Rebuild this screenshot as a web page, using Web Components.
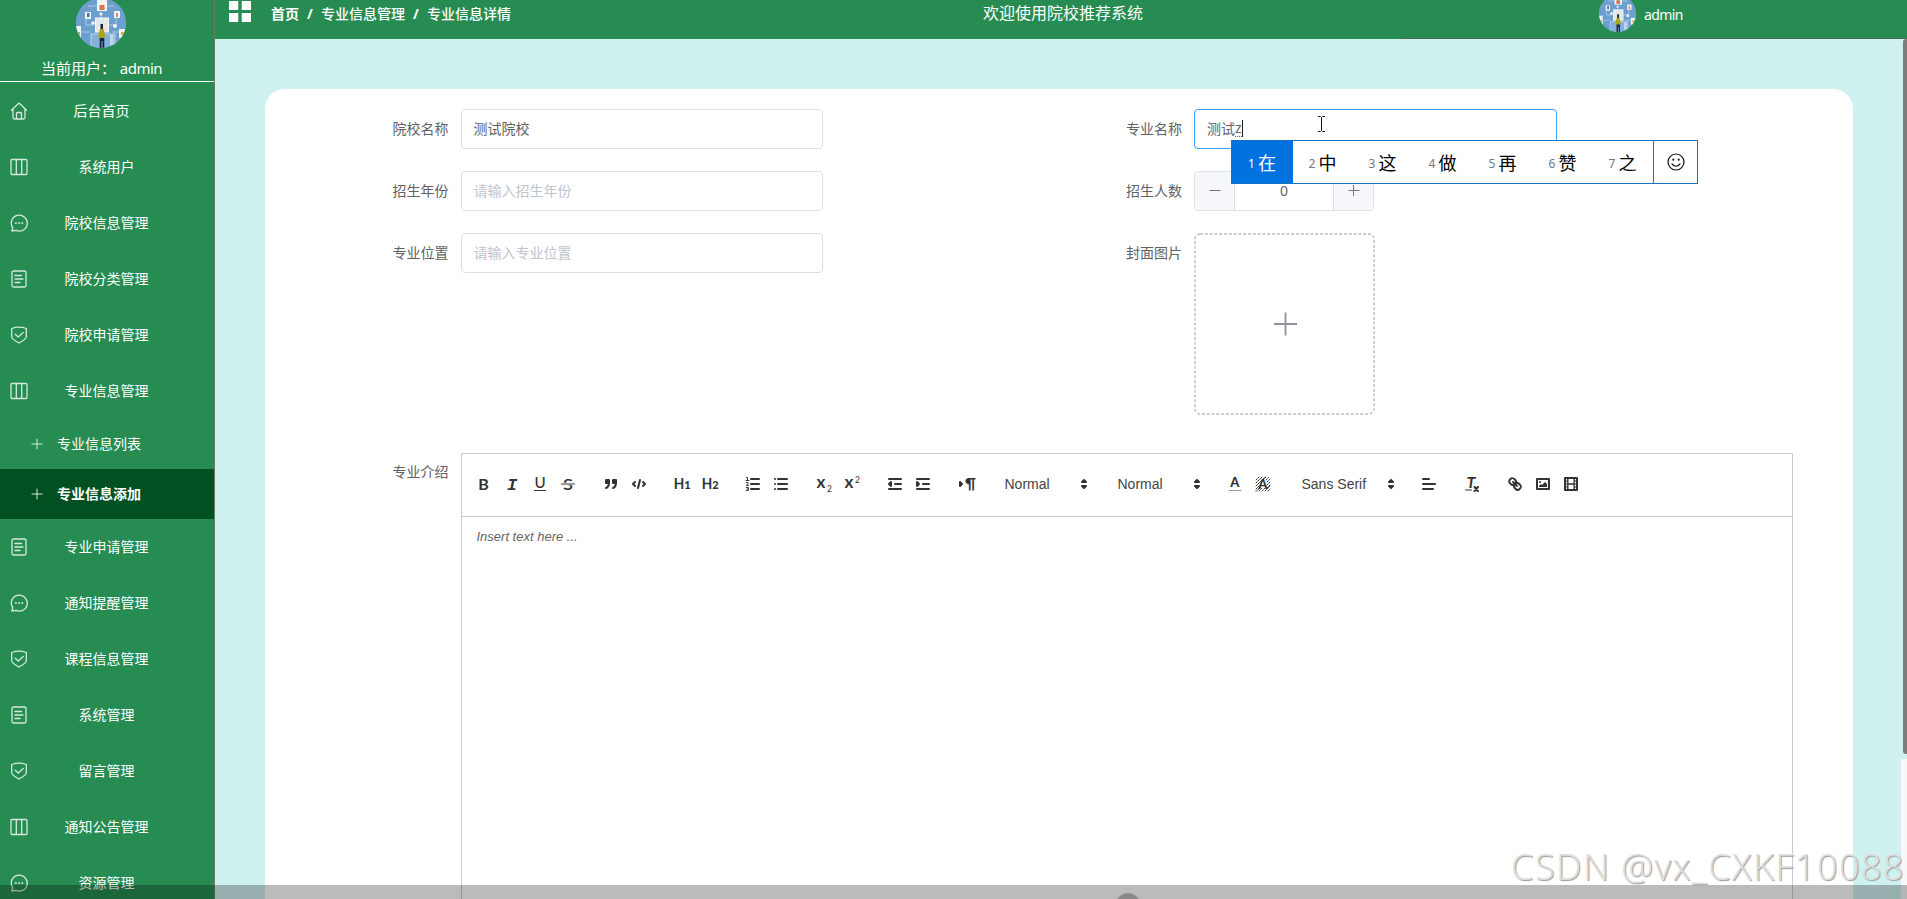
<!DOCTYPE html>
<html lang="zh-CN">
<head>
<meta charset="UTF-8">
<title>院校推荐系统</title>
<style>
  html, body { margin: 0; height: 100%; overflow: hidden; }
  body { font-family: "Noto Sans", "Noto Sans CJK SC", sans-serif; font-size: 14px; color: #606266; }
</style>
</head>
<body>
<admin-layout>
  <side-menu slot="side" user="admin">
    <menu-item icon="home" home>后台首页</menu-item>
    <menu-item icon="columns">系统用户</menu-item>
    <menu-item icon="chat">院校信息管理</menu-item>
    <menu-item icon="doc">院校分类管理</menu-item>
    <menu-item icon="shield">院校申请管理</menu-item>
    <menu-item icon="columns">专业信息管理</menu-item>
    <menu-item icon="plus" sub>专业信息列表</menu-item>
    <menu-item icon="plus" sub active>专业信息添加</menu-item>
    <menu-item icon="doc">专业申请管理</menu-item>
    <menu-item icon="chat">通知提醒管理</menu-item>
    <menu-item icon="shield">课程信息管理</menu-item>
    <menu-item icon="doc">系统管理</menu-item>
    <menu-item icon="shield">留言管理</menu-item>
    <menu-item icon="columns">通知公告管理</menu-item>
    <menu-item icon="chat">资源管理</menu-item>
  </side-menu>
  <top-bar slot="top" user="admin">欢迎使用院校推荐系统</top-bar>
  <form-card>
    <form-field label="院校名称"><text-input value="测试院校"></text-input></form-field>
    <form-field label="专业名称"><text-input value="测试" typing="z" focused></text-input></form-field>
    <form-field label="招生年份"><text-input placeholder="请输入招生年份"></text-input></form-field>
    <form-field label="招生人数"><number-stepper>0</number-stepper></form-field>
    <form-field label="专业位置"><text-input placeholder="请输入专业位置"></text-input></form-field>
    <form-field label="封面图片"><image-upload></image-upload></form-field>
    <form-field label="专业介绍" wide><rich-editor placeholder="Insert text here ..."></rich-editor></form-field>
  </form-card>
</admin-layout>
<ime-bar></ime-bar>
<page-overlay>CSDN @vx_CXKF10088</page-overlay>

<script>
const ICONS = {
  home: '<path d="M1.500 8.200 9 1l7.500 7.200M3 7v8.500q0 1.500 1.500 1.500h9q1.500 0 1.500-1.500V7M6.500 17v-5.500q0-1 1-1h3q1 0 1 1V17"/>',
  columns: '<rect x="1" y="1.500" width="16" height="15" rx="1"/><path d="M6.300 1.500v15M11.700 1.500v15"/>',
  chat: '<path d="M2.800 13.800A8 8 0 1 1 6 16.400L1.800 17z"/><path d="M5.500 9h.6M8.700 9h.6M11.900 9h.6" stroke-width="1.700"/>',
  doc: '<rect x="2" y="1" width="14" height="16" rx="1.500"/><path d="M5 5.500h6.500M5 9h8M5 12.500h5"/>',
  shield: '<path d="M1.700 2.500Q9-.2 16.300 2.500V11q0 2-7.300 6-7.300-4-7.300-6z"/><path d="m5.200 8.300 3 2.800 5-4.600"/>',
  plus: '<path d="M9 4v10M4 9h10"/>'
};

class AdminLayout extends HTMLElement {
  connectedCallback() {
    this.attachShadow({ mode: "open" });
    this.shadowRoot.innerHTML = `
      <style>
        :host {
          display: grid;
          grid-template: 39px 860px / 215px 1fr;
          width: 100%;
          height: 899px;
          overflow: hidden;
          background: #cff2f0;
        }
        .side { grid-row: 1 / 3; overflow: hidden; }
        main {
          display: flex;
          align-items: flex-start;
          padding: 50px 48px 0 50px;
          overflow: hidden;
          min-width: 0;
        }
        .scroll {
          width: 6px;
          height: 860px;
          display: flex;
          flex-direction: column;
          align-items: flex-end;
        }
        .thumb { width: 4px; height: 715px; background: #7b7b7b; border-radius: 3px 0 0 3px; }
        .track { width: 6px; flex: 1; margin-top: 5px; background: #f8f8f8; }
        .body { display: grid; grid-template-columns: 1fr 6px; overflow: hidden; }
      </style>
      <div class="side"><slot name="side"></slot></div>
      <slot name="top"></slot>
      <div class="body">
        <main><slot></slot></main>
        <div class="scroll"><div class="thumb"></div><div class="track"></div></div>
      </div>
    `;
  }
}

class UserAvatar extends HTMLElement {
  connectedCallback() {
    this.attachShadow({ mode: "open" });
    this.shadowRoot.innerHTML = `
      <style>
        :host { display: block; border-radius: 50%; overflow: hidden; background: #6c9fce; }
        svg { display: block; width: 100%; height: 100%; }
      </style>
      <svg viewBox="0 0 50 50">
        <rect width="50" height="50" fill="#6d9fce"/>
        <path d="M12 8h26M10 19v8h8M40 19v8h-8M25 14v6M5 34h9M36 34h9" stroke="#a9cbe6" fill="none"/>
        <g fill="#f1f4f5">
          <rect x="21" y="2" width="10" height="11"/><rect x="9" y="14" width="6" height="7"/>
          <rect x="38" y="13" width="6" height="7"/>
          <rect x="0" y="28" width="5" height="12"/><rect x="43" y="31" width="7" height="9"/>
          <circle cx="17" cy="25" r="1.800"/><circle cx="39" cy="28" r="2"/><circle cx="25" cy="16" r="1.500"/>
        </g>
        <rect x="19.500" y="20" width="13" height="14" fill="#e3e7e8" stroke="#f6f8f8"/>
        <rect x="23.500" y="7" width="5" height="5" fill="#dd7253"/>
        <rect x="11" y="15" width="2.500" height="4" fill="#506f9b"/><rect x="40" y="15" width="2" height="4" fill="#d98772"/>
        <rect x="15" y="36" width="24" height="15" fill="#86b0d9" stroke="#b9d4ea"/>
        <rect x="34" y="37" width="3.500" height="10" fill="#c3d8e8"/>
        <rect x="1" y="34" width="3" height="3" fill="#c8a34b"/><rect x="45" y="34" width="3" height="3" fill="#d7b33e"/>
        <path d="m22 38 2-7h3.500l2 7-2 2.500h-3.500z" fill="#a9a51c"/>
        <path d="M24.500 26h2.500v5h-2.500zM23.700 40h4.600v10h-1.800v-7h-1v7h-1.800z" fill="#172334"/>
      </svg>
    `;
  }
}

class SideMenu extends HTMLElement {
  connectedCallback() {
    this.attachShadow({ mode: "open" });
    this.shadowRoot.innerHTML = `
      <style>
        :host {
          display: block;
          box-sizing: border-box;
          height: 899px;
          overflow: hidden;
          background: #278c52;
          border-right: 1px solid #687f6e;
          color: #fff;
        }
        .user {
          box-sizing: border-box;
          height: 82px;
          border-bottom: 1px solid #fff;
          display: flex;
          flex-direction: column;
          align-items: center;
          margin-bottom: 1px;
        }
        user-avatar { width: 50px; height: 50px; margin: -2px 12px 8px 0; flex: none; }
        .name { font-size: 15px; line-height: 24px; margin-right: 11px; white-space: pre; }
        .name b { font-weight: 400; letter-spacing: -0.5px; }
      </style>
      <div class="user">
        <user-avatar></user-avatar>
        <div class="name">当前用户： <b>${this.getAttribute("user")}</b></div>
      </div>
      <slot></slot>
    `;
  }
}

class MenuItem extends HTMLElement {
  connectedCallback() {
    this.attachShadow({ mode: "open" });
    this.shadowRoot.innerHTML = `
      <style>
        :host {
          display: flex;
          align-items: center;
          box-sizing: border-box;
          height: 56px;
          padding-left: 10px;
          color: #fff;
        }
        svg {
          width: 18px;
          height: 18px;
          flex: none;
          margin-top: -1px;
          fill: none;
          stroke: #d3eadc;
          stroke-width: 1.300;
          stroke-linejoin: round;
          stroke-linecap: round;
        }
        .text { flex: 1; text-align: center; padding-right: 29px; line-height: 20px; }
        :host([home]) .text { padding-right: 39px; }
        :host([sub]) { height: 50px; padding-left: 28px; }
        :host([sub]) svg { stroke-width: 1; }
        :host([sub]) .text { text-align: left; padding: 0 0 0 11px; }
        :host([active]) { background: #005021; }
        :host([active]) .text { font-weight: 700; }
      </style>
      <svg viewBox="0 0 18 18">${ICONS[this.getAttribute("icon")]}</svg>
      <span class="text"><slot></slot></span>
    `;
  }
}

class TopBar extends HTMLElement {
  connectedCallback() {
    this.attachShadow({ mode: "open" });
    this.shadowRoot.innerHTML = `
      <style>
        :host {
          display: grid;
          grid-template-columns: 768px 616px 1fr;
          height: 39px;
          background: linear-gradient(#4a6654, #4a6654) right bottom / 504px 1px no-repeat #278c52;
          color: #fff;
        }
        .left { display: flex; align-items: flex-start; padding-left: 14px; }
        .grid { width: 22px; height: 21px; margin-top: 1px; fill: #fff; }
        nav { display: flex; margin-left: 20px; line-height: 28px; font-weight: 500; }
        nav b { font-weight: 700; }
        nav i { font-style: normal; font-weight: 700; width: 22px; text-align: center; }
        .title { font-size: 16px; line-height: 27px; }
        .user { display: flex; gap: 8px; line-height: 29px; letter-spacing: -0.6px; }
        user-avatar { width: 37px; height: 37px; margin-top: -5px; }
      </style>
      <div class="left">
        <svg class="grid" viewBox="0 0 22 21"><path d="M0 0h9.300v9H0zM12.700 0H22v9h-9.300zM0 12h9.300v9H0zM12.700 12H22v9h-9.300z"/></svg>
        <nav><b>首页</b><i>/</i><span>专业信息管理</span><i>/</i><span>专业信息详情</span></nav>
      </div>
      <div class="title"><slot></slot></div>
      <div class="user"><user-avatar></user-avatar><span>${this.getAttribute("user")}</span></div>
    `;
  }
}

class FormCard extends HTMLElement {
  connectedCallback() {
    this.attachShadow({ mode: "open" });
    this.shadowRoot.innerHTML = `
      <style>
        :host {
          flex: 1;
          min-width: 0;
          box-sizing: border-box;
          display: grid;
          grid-template-columns: 733.5px 1fr;
          row-gap: 22px;
          height: 900px;
          padding: 20px 60px 0 115.5px;
          align-content: start;
          background: #fff;
          border-radius: 20px;
        }
      </style>
      <slot></slot>
    `;
  }
}

class FormField extends HTMLElement {
  connectedCallback() {
    this.attachShadow({ mode: "open" });
    this.shadowRoot.innerHTML = `
      <style>
        :host { display: flex; align-items: flex-start; }
        :host([wide]) { grid-column: 1 / 3; margin-top: 16px; }
        .label { width: 68px; padding-right: 12px; text-align: right; line-height: 40px; flex: none; }
        :host([wide]) .label { line-height: 38px; }
        .content { flex: 1; min-width: 0; }
      </style>
      <div class="label">${this.getAttribute("label")}</div>
      <div class="content"><slot></slot></div>
    `;
  }
}

class TextInput extends HTMLElement {
  connectedCallback() {
    const value = this.getAttribute("value");
    const typing = this.getAttribute("typing");
    this.attachShadow({ mode: "open" });
    this.shadowRoot.innerHTML = `
      <style>
        :host {
          display: flex;
          align-items: center;
          box-sizing: border-box;
          width: 362.5px;
          height: 40px;
          padding: 0 12px 2px;
          border: 1px solid #dcdfe6;
          border-radius: 4px;
          background: #fff;
        }
        :host([focused]) { border-color: #409eff; }
        .placeholder { color: #c0c4cc; }
        .typing { line-height: 17px; border-bottom: 1px dotted #606266; }
        .caret { width: 1px; height: 17px; background: #222; }
        .pointer { width: 9px; height: 18px; margin: -8px 0 0 74px; fill: none; stroke: #111; }
      </style>
      ${value ? `<span>${value}</span>` : `<span class="placeholder">${this.getAttribute("placeholder")}</span>`}
      ${typing ? `<span class="typing">${typing}</span><span class="caret"></span>
        <svg class="pointer" viewBox="0 0 9 18"><path d="M1 1.500h2.500l1 1 1-1H8M1 16.500h2.500l1-1 1 1H8M4.500 2.500v13"/></svg>` : ""}
    `;
  }
}

class NumberStepper extends HTMLElement {
  connectedCallback() {
    this.attachShadow({ mode: "open" });
    this.shadowRoot.innerHTML = `
      <style>
        :host {
          display: grid;
          grid-template-columns: 40px 1fr 40px;
          box-sizing: border-box;
          width: 180px;
          height: 40px;
          border: 1px solid #dcdfe6;
          border-radius: 4px;
          overflow: hidden;
          line-height: 37px;
          text-align: center;
        }
        .btn { background: #f5f7fa; display: grid; place-items: center; box-sizing: border-box; height: 38px; }
        .dec { border-right: 1px solid #dcdfe6; }
        .inc { border-left: 1px solid #dcdfe6; }
        svg { width: 12px; height: 12px; stroke: #707379; fill: none; }
      </style>
      <div class="btn dec"><svg viewBox="0 0 12 12"><path d="M.5 5.500h11"/></svg></div>
      <div><slot></slot></div>
      <div class="btn inc"><svg viewBox="0 0 12 12"><path d="M.5 5.500h11M5.500 0v11"/></svg></div>
    `;
  }
}

class ImageUpload extends HTMLElement {
  connectedCallback() {
    this.attachShadow({ mode: "open" });
    this.shadowRoot.innerHTML = `
      <style>
        :host { display: block; width: 181px; height: 182px; }
        svg { display: block; width: 181px; height: 182px; fill: none; }
      </style>
      <svg viewBox="0 0 181 182">
        <rect x="1" y="1" width="179" height="180" rx="5" stroke="#cdcdcd" stroke-width="1.800" stroke-dasharray="3 1.800"/>
        <path d="M91.500 79.500v23M80 91h23" stroke="#8c939d" stroke-width="1.800"/>
      </svg>
    `;
  }
}

// Toolbar icons share one 18x18 grid; .s is a stroke, .t a thin stroke, .f a fill.
const TOOLS = {
  bold: '<text x="3.300" y="14.600" font-size="16" font-weight="700">B</text>',
  italic: '<text x="4" y="14.600" font-size="17" font-weight="700" font-style="italic" class="mono">I</text>',
  underline: '<text x="3.400" y="12.600" font-size="15.500" font-weight="500" textLength="11.200" lengthAdjust="spacingAndGlyphs">U</text><rect class="f" x="3" y="15" width="12" height="1" rx=".5"/>',
  strike: '<text x="4" y="14.600" font-size="16" font-weight="600" textLength="10" lengthAdjust="spacingAndGlyphs">S</text><path class="t" d="M2.500 9h13" style="stroke:#fff;stroke-width:2.500"/><path class="t" d="M2.500 9h13"/>',
  quote: '<rect class="f s" height="3" width="3" x="4" y="5"/><rect class="f s" height="3" width="3" x="11" y="5"/><path class="f s" d="M7 8c0 4.031-3 5-3 5M14 8c0 4.031-3 5-3 5"/>',
  code: '<path class="s" d="m5 7-2 2 2 2M13 7l2 2-2 2M10 5 8 13"/>',
  h1: '<text x=".8" y="14.400" font-size="15.500" font-weight="700" textLength="10.500" lengthAdjust="spacingAndGlyphs">H</text><text x="11.300" y="14.400" font-size="11" font-weight="900">1</text>',
  h2: '<text x=".8" y="14.400" font-size="15.500" font-weight="700" textLength="10.500" lengthAdjust="spacingAndGlyphs">H</text><text x="11.300" y="14.400" font-size="11" font-weight="900">2</text>',
  ol: '<path class="s" d="M7 4h8M7 9h8M7 14h8"/><path class="t" d="M2.500 2.500h1v3M2 5.500h3M2.300 7.500h1.700v1.200L2.300 10.500h2.200M2.300 12.500h2v3h-2M3 14h1.300"/>',
  ul: '<path class="s" d="M6 4h9M6 9h9M6 14h9M3 4h.01M3 9h.01M3 14h.01"/>',
  sub: '<text x="1.500" y="13.400" font-size="17" font-weight="700">x</text><text x="12" y="16.500" font-size="8.500">2</text>',
  sup: '<text x="1.500" y="13.400" font-size="17" font-weight="700">x</text><text x="12" y="8" font-size="8.500">2</text>',
  outdent: '<path class="s" d="M3 14h12M3 4h12M9 9h6"/><path class="f s" d="M5 7v4L3 9z"/>',
  indent: '<path class="s" d="M3 14h12M3 4h12M9 9h6"/><path class="f s" d="M3 7v4l2-2z"/>',
  direction: '<path class="f s" d="m3 11 2-2-2-2z"/><text x="8" y="14" font-size="15" font-weight="700">¶</text>',
  color: '<text x="4.300" y="12.200" font-size="13" font-weight="900">A</text><path class="t" d="M3 15.500h12" opacity=".5"/>',
  background: '<path class="t" stroke-dasharray="1.500 1" d="M2 5l3-3M2 8l6-6M2 11l9-9M2 14l3-3M9 5l3-3M2 16.500l4-4M12 5l3-3M13 7l3-3M13 10l3-3M13 13l3-3M5 16l3-3M8 16l3-3M11 16l5-5M14 16l2-2"/><text x="4.300" y="13.800" font-size="13" font-weight="900">A</text>',
  align: '<path class="s" d="M3 9h12M3 14h10M3 4h6"/>',
  clean: '<text x="3.500" y="13" font-size="16" font-style="italic" font-weight="700">T</text><path class="s" d="m11.500 12 3.500 4M15 12l-3.500 4"/><path class="t" d="M2.500 15h6"/>',
  link: '<path class="s" d="m7 7 4 4"/><path class="s" d="M8.900 4.577a3.476 3.476 0 0 1 .36 4.679A3.476 3.476 0 0 1 4.577 8.900C3.185 7.500 2.035 6.400 4.217 4.217S7.500 3.185 8.900 4.577ZM13.423 9.100a3.476 3.476 0 0 0-4.679-.36 3.476 3.476 0 0 0 .36 4.679c1.392 1.392 2.500 2.542 4.679.36s1.032-3.287-.36-4.679Z"/>',
  image: '<rect class="s" height="10" width="12" x="3" y="4"/><circle class="f" cx="6" cy="7" r="1"/><path class="f" d="M5 12v-1l2-2 1 1 3-3 2 2v3z"/>',
  video: '<rect class="s" height="12" width="12" x="3" y="3"/><path class="s" style="stroke-width:1.400" d="M5.800 3v12M12.200 3v12M5.800 9h6.400"/><path class="t" d="M3 6h2M3 9h2M3 12h2M13 6h2M13 9h2M13 12h2"/>'
};

class RichEditor extends HTMLElement {
  connectedCallback() {
    const tools = (...names) => `<div class="group">${names.map(n => `<button>${this.icon(n)}</button>`).join("")}</div>`;
    const picker = (label, width) => `
      <div class="group"><div class="picker" style="width:${width}px"><span>${label}</span>
        <svg viewBox="0 0 18 18"><path class="f s" d="m7 11 2 2 2-2zM7 7l2-2 2 2z"/></svg>
      </div></div>`;

    this.attachShadow({ mode: "open" });
    this.shadowRoot.innerHTML = `
      <style>
        :host { display: block; box-sizing: border-box; height: 460px; border: 1px solid #ccc; font-family: "Liberation Sans", Arial, sans-serif; }
        .toolbar {
          display: flex;
          align-items: center;
          box-sizing: border-box;
          height: 63px;
          padding: 0 8px 2px;
          border-bottom: 1px solid #ccc;
        }
        .group { display: flex; margin-right: 15px; }
        button { width: 28px; height: 24px; padding: 3px 5px; border: 0; background: none; display: block; }
        svg { display: block; width: 18px; height: 18px; overflow: visible; }
        text { fill: #333; font-family: Lato, sans-serif; }
        .mono { font-family: "Liberation Mono", monospace; }
        .s { fill: none; stroke: #333; stroke-width: 2; stroke-linecap: round; stroke-linejoin: round; }
        .t { fill: none; stroke: #333; stroke-width: 1; stroke-linecap: round; }
        .f { fill: #333; }
        .picker {
          display: flex;
          align-items: center;
          justify-content: space-between;
          box-sizing: border-box;
          height: 24px;
          padding-left: 10px;
          font-size: 14px;
          font-weight: 500;
          color: #444;
        }
        .area { padding: 11px 15px; font-size: 13px; line-height: 18px; font-style: italic; color: #666; }
      </style>
      <div class="toolbar">
        ${tools("bold", "italic", "underline", "strike")}
        ${tools("quote", "code")}
        ${tools("h1", "h2")}
        ${tools("ol", "ul")}
        ${tools("sub", "sup")}
        ${tools("outdent", "indent")}
        ${tools("direction")}
        ${picker("Normal", 98)}
        ${picker("Normal", 98)}
        ${tools("color", "background")}
        ${picker("Sans Serif", 108)}
        ${tools("align")}
        ${tools("clean")}
        ${tools("link", "image", "video")}
      </div>
      <div class="area">${this.getAttribute("placeholder")}</div>
    `;
  }

  icon(name) {
    return `<svg viewBox="0 0 18 18">${TOOLS[name]}</svg>`;
  }
}

class ImeBar extends HTMLElement {
  connectedCallback() {
    const words = ["在", "中", "这", "做", "再", "赞", "之"];
    this.attachShadow({ mode: "open" });
    this.shadowRoot.innerHTML = `
      <style>
        :host {
          position: absolute;
          left: 1231px;
          top: 140px;
          display: flex;
          box-sizing: border-box;
          width: 467px;
          height: 44px;
          border: 1px solid #1474c4;
          background: #fff;
          color: #000;
        }
        .word { width: 60px; display: flex; align-items: center; justify-content: center; gap: 3px; font-size: 18px; padding: 0 1px 1px 0; box-sizing: border-box; }
        .word small { font-size: 12px; color: #777; padding-top: 3px; }
        .word.on { width: 61px; background: #0072e0; color: #fff; }
        .word.on small { color: #fff; }
        .face { flex: 1; display: grid; place-items: center; border-left: 1px solid #1474c4; }
        svg { width: 18px; height: 18px; fill: none; stroke: #111; stroke-width: 1.200; stroke-linecap: round; }
      </style>
      ${words.map((w, i) => `<div class="word${i ? "" : " on"}"><small>${i + 1}</small><span>${w}</span></div>`).join("")}
      <div class="face"><svg viewBox="0 0 18 18"><circle cx="9" cy="9" r="8"/><path d="M5 11q4 4.500 8 0"/><path d="M6.300 6.500v.3M11.700 6.500v.3" stroke-width="2"/></svg></div>
    `;
  }
}

class PageOverlay extends HTMLElement {
  connectedCallback() {
    this.attachShadow({ mode: "open" });
    this.shadowRoot.innerHTML = `
      <style>
        :host { position: absolute; left: 0; right: 0; bottom: 0; height: 56px; overflow: hidden; pointer-events: none; }
        .bar { position: absolute; left: 0; right: 0; bottom: 0; height: 14px; background: rgba(0, 0, 0, 0.267); overflow: hidden; }
        .knob { position: absolute; left: 1116px; top: 8px; width: 24px; height: 24px; border-radius: 50%; background: #888; }
        .mark {
          position: absolute;
          right: 2px;
          top: 0;
          font-size: 36px;
          line-height: 48px;
          letter-spacing: 1.480px;
          font-family: "Open Sans", sans-serif;
          font-weight: 300;
          white-space: nowrap;
          color: #dedede;
          text-shadow: 1px 1px 1px #999;
        }
      </style>
      <div class="bar"><div class="knob"></div></div>
      <div class="mark"><slot></slot></div>
    `;
  }
}

customElements.define("user-avatar", UserAvatar);
customElements.define("admin-layout", AdminLayout);
customElements.define("side-menu", SideMenu);
customElements.define("menu-item", MenuItem);
customElements.define("top-bar", TopBar);
customElements.define("form-card", FormCard);
customElements.define("form-field", FormField);
customElements.define("text-input", TextInput);
customElements.define("number-stepper", NumberStepper);
customElements.define("image-upload", ImageUpload);
customElements.define("rich-editor", RichEditor);
customElements.define("ime-bar", ImeBar);
customElements.define("page-overlay", PageOverlay);
</script>
</body>
</html>
